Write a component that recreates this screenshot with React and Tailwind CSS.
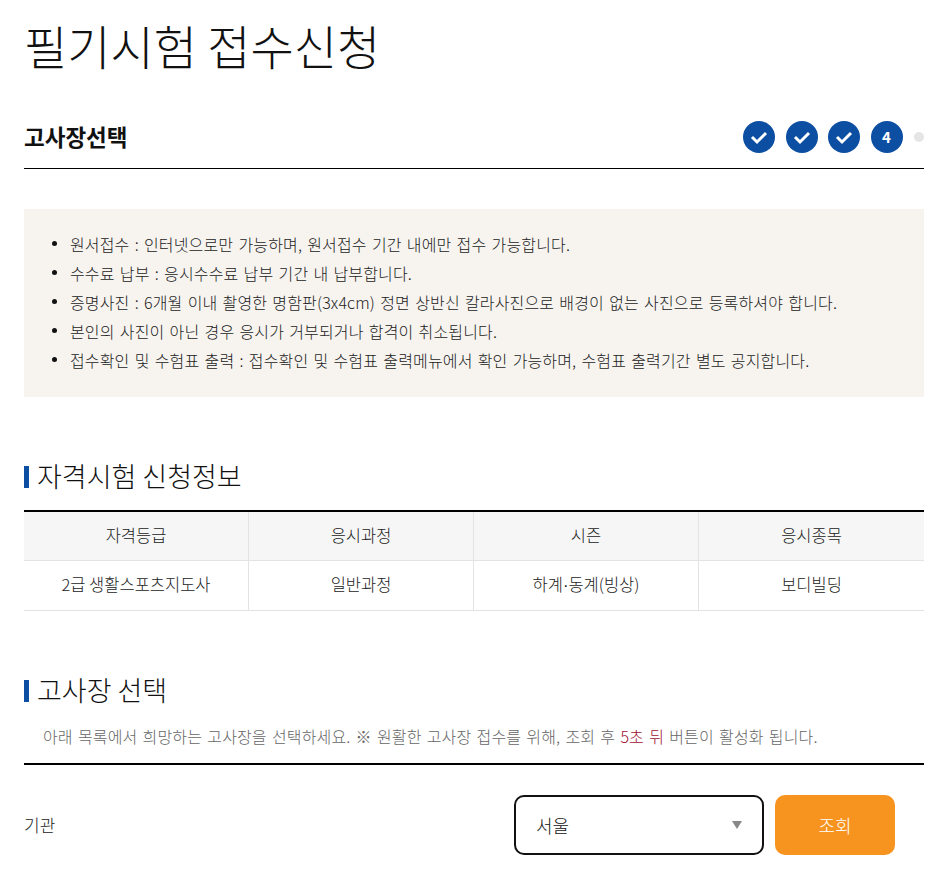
const notices = [
  "원서접수 : 인터넷으로만 가능하며, 원서접수 기간 내에만 접수 가능합니다.",
  "수수료 납부 : 응시수수료 납부 기간 내 납부합니다.",
  "증명사진 : 6개월 이내 촬영한 명함판(3x4cm) 정면 상반신 칼라사진으로 배경이 없는 사진으로 등록하셔야 합니다.",
  "본인의 사진이 아닌 경우 응시가 거부되거나 합격이 취소됩니다.",
  "접수확인 및 수험표 출력 : 접수확인 및 수험표 출력메뉴에서 확인 가능하며, 수험표 출력기간 별도 공지합니다.",
];

const headers = ["자격등급", "응시과정", "시즌", "응시종목"];
const values = [
  "2급 생활스포츠지도사",
  "일반과정",
  <>하계<span className="font-['Liberation_Sans']">·</span>동계(빙상)</>,
  "보디빌딩",
];

const CheckStep = () => (
  <span className="w-8 h-8 rounded-full bg-[#0b4ea2] flex items-center justify-center">
    <svg width="20" height="16" viewBox="0 0 20 16" fill="none">
      <path d="M3 8l5 5 9-9" stroke="white" strokeWidth="3" />
    </svg>
  </span>
);

const SectionTitle = ({ children }) => (
  <h2 className="flex items-center text-[27px] leading-[34px] font-light text-[#111]">
    <span className="w-[5px] h-[22px] mt-[2px] bg-[#0b4ea2] mr-2" />
    {children}
  </h2>
);

export default function App() {
  return (
    <div className="w-[938px] h-[883px] overflow-hidden bg-white pl-6 pr-3.5 text-[#222] font-light font-['Noto_Sans_CJK_KR',sans-serif]">
      <h1 className="pt-[12px] h-[96px] text-[47px] leading-[66px] font-light text-[#111]">필기시험 접수신청</h1>

      {/* step header */}
      <div className="h-[73px] flex items-center justify-between border-b border-black pt-[10px]">
        <div className="text-[22.5px] font-bold text-[#111]">고사장선택</div>
        <div className="flex items-center gap-[10.5px]">
          <CheckStep />
          <CheckStep />
          <CheckStep />
          <span className="w-8 h-8 rounded-full bg-[#0b4ea2] flex items-center justify-center text-white text-[15px] font-bold">4</span>
          <span className="ml-px w-[10px] h-[10px] rounded-full bg-[#e5e5e5]" />
        </div>
      </div>

      {/* notices */}
      <ul className="mt-10 h-[188px] bg-[#f7f4f0] pt-[20px] pl-[28px]">
        {notices.map((item) => (
          <li key={item} className="h-[29px] flex items-center text-[16px] tracking-[0.15px] [word-spacing:1.5px] text-[#222]">
            <span className="w-[5px] h-[5px] rounded-full bg-[#111] mr-[13px] shrink-0" />
            {item}
          </li>
        ))}
      </ul>

      <div className="mt-[62px]">
        <SectionTitle>자격시험 신청정보</SectionTitle>
      </div>

      {/* info table */}
      <div className="mt-[17px] border-t-2 border-black">
        <div className="grid grid-cols-4 h-[49px] bg-[#f6f6f6] border-b border-[#e3e3e3]">
          {headers.map((h, i) => (
            <div key={h} className={`flex items-center justify-center pb-[2px] text-[16.5px] ${i < 3 ? "border-r border-[#e3e3e3]" : ""}`}>{h}</div>
          ))}
        </div>
        <div className="grid grid-cols-4 h-[50px] border-b border-[#e3e3e3]">
          {values.map((v, i) => (
            <div key={i} className={`flex items-center justify-center pb-[2px] text-[16.5px] ${i < 3 ? "border-r border-[#e3e3e3]" : ""}`}>
              <span>{v}</span>
            </div>
          ))}
        </div>
      </div>

      <div className="mt-[62px]">
        <SectionTitle>고사장 선택</SectionTitle>
      </div>

      <p className="mt-[17px] pl-[19px] text-[16px] leading-[24px] tracking-[0.15px] [word-spacing:1.5px] text-[#666] whitespace-nowrap">
        아래 목록에서 희망하는 고사장을 선택하세요. ※ 원활한 고사장 접수를 위해, 조회 후 <span className="text-[#a01030]">5초 뒤</span> 버튼이 활성화 됩니다.
      </p>

      <div className="mt-[15px] border-t-2 border-black pt-[30px] flex items-center">
        <span className="text-[17px] text-[#222]">기관</span>
        <div className="ml-auto w-[250px] h-[60px] border-2 border-[#111] rounded-[10px] flex items-center justify-between pl-5 pr-[20px] text-[18px] text-[#111]">
          서울
          <span className="w-0 h-0 border-x-[5.5px] border-x-transparent border-t-[8px] border-t-[#888]" />
        </div>
        <button className="ml-[11px] mr-[29px] w-[120px] h-[60px] rounded-[10px] bg-[#f79420] text-white text-[18px]">조회</button>
      </div>
    </div>
  );
}
